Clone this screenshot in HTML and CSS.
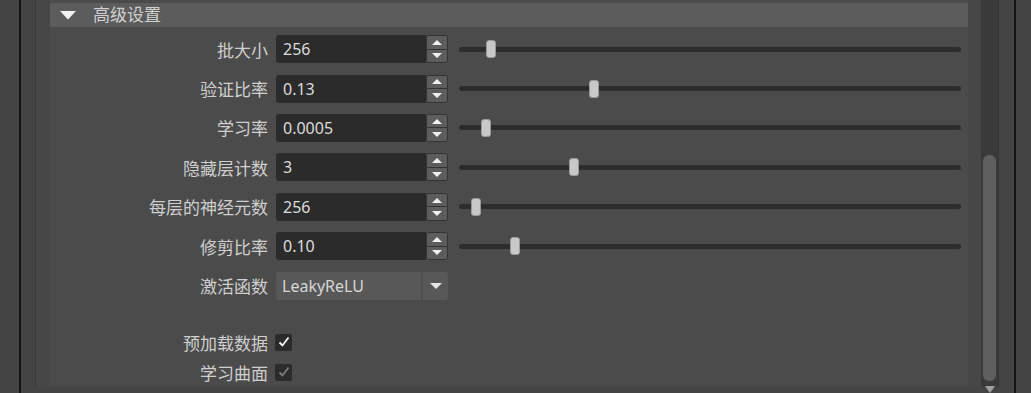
FILE: index.html
```html
<!DOCTYPE html>
<html lang="zh">
<head>
    <meta charset="UTF-8">
    <title>高级设置</title>
    <link rel="stylesheet" href="styles.css">
</head>
<body>
    <div class="window">
        <div class="edge-left"></div>
        <div class="frame">
            <div class="pane">
                <div class="panel">
                    <div class="panel-header">
                        <svg class="caret" width="16" height="9" viewBox="0 0 16 9"><polygon points="0,0 16,0 8,8.5" fill="#f2f2f2"/></svg>
                        <span class="panel-title">高级设置</span>
                    </div>
                    <div class="panel-body">
                        <div class="row">
                            <label class="label">批大小</label>
                            <div class="spin">
                                <div class="spin-value">256</div>
                                <div class="spin-buttons">
                                    <button class="spin-btn up"></button>
                                    <button class="spin-btn down"></button>
                                </div>
                            </div>
                            <div class="slider"><div class="track"></div><div class="handle" style="left: 6.4%"></div></div>
                        </div>
                        <div class="row">
                            <label class="label">验证比率</label>
                            <div class="spin">
                                <div class="spin-value">0.13</div>
                                <div class="spin-buttons">
                                    <button class="spin-btn up"></button>
                                    <button class="spin-btn down"></button>
                                </div>
                            </div>
                            <div class="slider"><div class="track"></div><div class="handle" style="left: 26.9%"></div></div>
                        </div>
                        <div class="row">
                            <label class="label">学习率</label>
                            <div class="spin">
                                <div class="spin-value">0.0005</div>
                                <div class="spin-buttons">
                                    <button class="spin-btn up"></button>
                                    <button class="spin-btn down"></button>
                                </div>
                            </div>
                            <div class="slider"><div class="track"></div><div class="handle" style="left: 5.4%"></div></div>
                        </div>
                        <div class="row">
                            <label class="label">隐藏层计数</label>
                            <div class="spin">
                                <div class="spin-value">3</div>
                                <div class="spin-buttons">
                                    <button class="spin-btn up"></button>
                                    <button class="spin-btn down"></button>
                                </div>
                            </div>
                            <div class="slider"><div class="track"></div><div class="handle" style="left: 22.9%"></div></div>
                        </div>
                        <div class="row">
                            <label class="label">每层的神经元数</label>
                            <div class="spin">
                                <div class="spin-value">256</div>
                                <div class="spin-buttons">
                                    <button class="spin-btn up"></button>
                                    <button class="spin-btn down"></button>
                                </div>
                            </div>
                            <div class="slider"><div class="track"></div><div class="handle" style="left: 3.4%"></div></div>
                        </div>
                        <div class="row">
                            <label class="label">修剪比率</label>
                            <div class="spin">
                                <div class="spin-value">0.10</div>
                                <div class="spin-buttons">
                                    <button class="spin-btn up"></button>
                                    <button class="spin-btn down"></button>
                                </div>
                            </div>
                            <div class="slider"><div class="track"></div><div class="handle" style="left: 11.2%"></div></div>
                        </div>
                        <div class="row">
                            <label class="label">激活函数</label>
                            <div class="combo">
                                <div class="combo-value">LeakyReLU</div>
                                <div class="combo-arrow"></div>
                            </div>
                        </div>
                        <div class="check-rows">
                            <div class="check-row">
                                <label class="label">预加载数据</label>
                                <span class="checkbox">
                                    <svg width="16" height="16" viewBox="0 0 16 16"><polyline points="3.5,8.5 6.5,11.5 12.5,3.5" fill="none" stroke="#f4f4f4" stroke-width="1.8"/></svg>
                                </span>
                            </div>
                            <div class="check-row">
                                <label class="label">学习曲面</label>
                                <span class="checkbox">
                                    <svg width="16" height="16" viewBox="0 0 16 16"><polyline points="3.5,8.5 6.5,11.5 12.5,3.5" fill="none" stroke="#7c7c7c" stroke-width="1.8"/></svg>
                                </span>
                            </div>
                        </div>
                    </div>
                </div>
                <div class="scrollbar">
                    <div class="scroll-thumb"></div>
                    <div class="scroll-arrow"></div>
                </div>
            </div>
        </div>
        <div class="edge-right"></div>
    </div>
</body>
</html>
```

FILE: styles.css
```css
body {
    margin: 0;
    background: #444444;
    font-family: "Noto Sans", "Noto Sans CJK SC", sans-serif;
    color: #cdcdcd;
    overflow: hidden;
}

.window {
    display: flex;
    height: 393px;
}

.edge-left {
    width: 19px;
    border-right: 2px solid #141414;
}

.frame {
    flex: 1;
    display: flex;
    padding-left: 14px;
    padding-right: 15px;
}

.pane {
    flex: 1;
    display: flex;
    border-left: 1px solid #383838;
    background: #474747;
    padding-left: 14px;
    height: 387px;
}

.edge-right {
    width: 2px;
    background: #141414;
    margin-right: 15px;
}

.panel {
    width: 918px;
    background: #4b4b4b;
    padding-top: 3px;
    height: 383px;
}

.panel-header {
    height: 24px;
    background: #5c5c5c;
    border-radius: 2px;
    display: flex;
    align-items: center;
}

.caret {
    flex-shrink: 0;
    margin-left: 10px;
    margin-top: 1px;
}

.panel-title {
    margin-left: 17px;
    font-size: 17px;
    line-height: 24px;
    color: #d0d0d0;
}

.panel-body {
    padding-top: 2.5px;
}

.row {
    display: flex;
    align-items: center;
    height: 39.4px;
}

.label {
    width: 218px;
    text-align: right;
    font-size: 17px;
    color: #cfcfcf;
    flex-shrink: 0;
}

.spin {
    display: flex;
    margin-left: 8px;
    width: 172px;
    height: 28px;
}

.spin-value {
    flex: 1;
    background: #2b2b2b;
    border-radius: 3px 0 0 3px;
    font-size: 16px;
    line-height: 29px;
    padding-left: 7px;
    color: #dcdcdc;
}

.spin-buttons {
    width: 22px;
    display: flex;
    flex-direction: column;
    border: 1px solid #333;
    border-radius: 3px;
    overflow: hidden;
    box-sizing: border-box;
}

.spin-btn {
    flex: 1;
    background: #5d5d5d;
    border: none;
    padding: 0;
    margin: 0;
    display: flex;
    align-items: center;
    justify-content: center;
}

.spin-btn.up {
    border-bottom: 1px solid #333;
}

.spin-btn.up::before {
    content: "";
    border-left: 5px solid transparent;
    border-right: 5px solid transparent;
    border-bottom: 5px solid #f0f0f0;
}

.spin-btn.down::before {
    content: "";
    border-left: 5px solid transparent;
    border-right: 5px solid transparent;
    border-top: 5px solid #f0f0f0;
}

.slider {
    position: relative;
    margin-left: 11px;
    width: 502px;
    height: 20px;
    display: flex;
    align-items: center;
}

.track {
    width: 100%;
    height: 5px;
    border-radius: 3px;
    background: #2d2d2d;
}

.handle {
    position: absolute;
    top: 1px;
    width: 10px;
    height: 18px;
    margin-left: -5px;
    border-radius: 3px;
    background: #c8c8c8;
    box-sizing: border-box;
    border: 1px solid #9a9a9a;
}

.combo {
    display: flex;
    margin-left: 8px;
    width: 172px;
    height: 28px;
    border-radius: 3px;
    overflow: hidden;
    background: #585858;
}

.combo-value {
    flex: 1;
    font-size: 16px;
    line-height: 29px;
    padding-left: 6px;
    color: #d6d6d6;
    border-right: 2px solid #4e4e4e;
}

.combo-arrow {
    width: 25px;
    display: flex;
    align-items: center;
    justify-content: center;
}

.combo-arrow::before {
    content: "";
    border-left: 6px solid transparent;
    border-right: 6px solid transparent;
    border-top: 6px solid #e6e6e6;
}

.check-rows {
    padding-top: 22px;
}

.check-row {
    display: flex;
    align-items: center;
    height: 30px;
}

.checkbox {
    margin-left: 7px;
    width: 17px;
    height: 17px;
    background: #2b2b2b;
    border-radius: 2px;
    display: flex;
    align-items: center;
    justify-content: center;
}

.scrollbar {
    width: 17px;
    margin-left: 13px;
    background: #3a3a3a;
    border-right: 1px solid #353535;
    position: relative;
}

.scroll-thumb {
    position: absolute;
    left: 2px;
    right: 2px;
    top: 155px;
    height: 226px;
    background: #5f5f5f;
    border-radius: 6px;
}

.scroll-arrow {
    position: absolute;
    left: 4px;
    bottom: -6px;
    border-left: 5px solid transparent;
    border-right: 5px solid transparent;
    border-top: 7px solid #a0a0a0;
}
```
